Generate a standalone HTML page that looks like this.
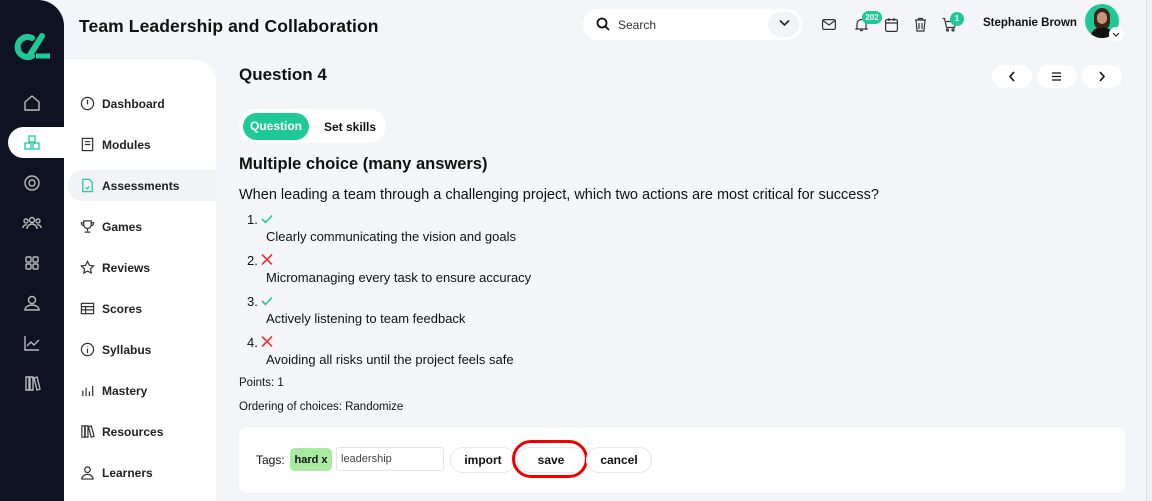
<!DOCTYPE html>
<html><head><style>
*{box-sizing:border-box;margin:0;padding:0}
body{width:1152px;height:501px;overflow:hidden;background:#f3f5f9;font-family:"Liberation Sans",sans-serif;color:#111;position:relative}
.side{position:absolute;left:0;top:0;width:64px;height:501px;background:#0f1222;border-top-right-radius:26px}
.si{position:absolute;left:22px;width:20px;height:20px}
.act{position:absolute;left:8px;top:127px;width:60px;height:31px;background:#fff;border-radius:16px 0 0 16px}
.nav{position:absolute;left:64px;top:60px;width:152px;height:441px;background:#fff;border-top-right-radius:22px}
.ni{position:absolute;left:4px;width:148px;height:31px;font-size:12px;font-weight:bold;color:#222;padding-left:34px;line-height:33px}
.ni svg{position:absolute;left:12px;top:8px}
.ni.on{background:#f1f3f7;border-radius:14px 0 0 14px}
.abs{position:absolute}
.btn{position:absolute;background:#fff;border-radius:14px;border:1px solid #e5e8ef;font-size:12px;font-weight:bold;text-align:center}
</style></head><body>
<div class="side">
<svg class="abs" style="left:12px;top:33px" width="40" height="28" viewBox="0 0 40 28"><path d="M20 5a10 10 0 1 0 0 18" stroke="#1ec997" stroke-width="6" fill="none" stroke-linecap="round"/><path d="M30 3L18 22" stroke="#1ec997" stroke-width="6" stroke-linecap="round"/><path d="M24 23h14" stroke="#1ec997" stroke-width="5"/></svg>
<svg class="si" style="top:93px" viewBox="0 0 20 20" fill="none" stroke="#bbb" stroke-width="1.4"><path d="M3 9l7-6 7 6v8H3z"/></svg>
<div class="act"></div>
<svg class="si" style="top:133px" viewBox="0 0 20 20" fill="none" stroke="#1ec997" stroke-width="1.3"><rect x="7" y="3" width="6" height="6"/><rect x="3" y="10" width="6" height="6"/><rect x="11" y="10" width="6" height="6"/></svg>
<svg class="si" style="top:173px" viewBox="0 0 20 20" fill="none" stroke="#bbb" stroke-width="1.4"><circle cx="10" cy="10" r="7"/><circle cx="10" cy="10" r="3"/></svg>
<svg class="si" style="top:213px" viewBox="0 0 20 20" fill="none" stroke="#bbb" stroke-width="1.4"><circle cx="10" cy="7" r="2.5"/><circle cx="4" cy="8" r="2"/><circle cx="16" cy="8" r="2"/><path d="M5 16a5 5 0 0 1 10 0M1 15a3 3 0 0 1 4-3M19 15a3 3 0 0 0-4-3"/></svg>
<svg class="si" style="top:253px" viewBox="0 0 20 20" fill="none" stroke="#bbb" stroke-width="1.4"><rect x="4" y="4" width="5" height="5" rx="1"/><rect x="11" y="4" width="5" height="5" rx="1"/><rect x="4" y="11" width="5" height="5" rx="1"/><rect x="11" y="11" width="5" height="5" rx="1"/></svg>
<svg class="si" style="top:293px" viewBox="0 0 20 20" fill="none" stroke="#bbb" stroke-width="1.4"><circle cx="10" cy="7" r="3.5"/><path d="M3 17a7 5 0 0 1 14 0z"/></svg>
<svg class="si" style="top:333px" viewBox="0 0 20 20" fill="none" stroke="#bbb" stroke-width="1.4"><path d="M3 3v14h14M5 13l4-4 3 3 5-5"/></svg>
<svg class="si" style="top:373px" viewBox="0 0 20 20" fill="none" stroke="#bbb" stroke-width="1.4"><path d="M4 4h3v13H4zM8 4h3v13H8zM12 5l3-1 3 12-3 1z"/></svg>
</div>
<div class="abs" style="left:79px;top:16px;font-size:17.5px;font-weight:bold;letter-spacing:0.1px">Team Leadership and Collaboration</div>
<div class="nav">
<div class="ni" style="top:28px"><svg width="15" height="15" viewBox="0 0 16 16" fill="none" stroke="#333" stroke-width="1.3"><circle cx="8" cy="8" r="6.5"/><path d="M8 4v5"/></svg>Dashboard</div>
<div class="ni" style="top:69px"><svg width="15" height="15" viewBox="0 0 16 16" fill="none" stroke="#333" stroke-width="1.3"><rect x="2.5" y="1.5" width="11" height="13"/><path d="M5 5h6M5 8h6"/></svg>Modules</div>
<div class="ni on" style="top:110px"><svg width="15" height="15" viewBox="0 0 16 16" fill="none" stroke="#1ec997" stroke-width="1.3"><path d="M3 1.5h7l3 3v10H3z"/><path d="M6 10l1.5 1.5L10 9"/></svg>Assessments</div>
<div class="ni" style="top:151px"><svg width="15" height="15" viewBox="0 0 16 16" fill="none" stroke="#333" stroke-width="1.3"><path d="M4 2h8v4a4 4 0 0 1-8 0zM4 4H1.5a2.5 2.5 0 0 0 2.5 3M12 4h2.5a2.5 2.5 0 0 1-2.5 3M8 10v3M5 14h6"/></svg>Games</div>
<div class="ni" style="top:192px"><svg width="15" height="15" viewBox="0 0 16 16" fill="none" stroke="#333" stroke-width="1.3"><path d="M8 1.5l2 4.2 4.5.6-3.3 3.1.8 4.5L8 11.8l-4 2.1.8-4.5L1.5 6.3 6 5.7z"/></svg>Reviews</div>
<div class="ni" style="top:233px"><svg width="15" height="15" viewBox="0 0 16 16" fill="none" stroke="#333" stroke-width="1.3"><rect x="1.5" y="2.5" width="13" height="11"/><path d="M1.5 6h13M1.5 9.5h13M6 6v7.5"/></svg>Scores</div>
<div class="ni" style="top:274px"><svg width="15" height="15" viewBox="0 0 16 16" fill="none" stroke="#333" stroke-width="1.3"><circle cx="8" cy="8" r="6.5"/><path d="M8 7v5M8 4.5v.5"/></svg>Syllabus</div>
<div class="ni" style="top:315px"><svg width="15" height="15" viewBox="0 0 16 16" fill="none" stroke="#333" stroke-width="1.3"><path d="M3 14V8M6.5 14V5M10 14V9M13.5 14V3"/></svg>Mastery</div>
<div class="ni" style="top:356px"><svg width="15" height="15" viewBox="0 0 16 16" fill="none" stroke="#333" stroke-width="1.3"><path d="M2 2h3v12H2zM5.5 2h3v12h-3zM9 3l3-1 3 11-3 1z"/></svg>Resources</div>
<div class="ni" style="top:397px"><svg width="15" height="15" viewBox="0 0 16 16" fill="none" stroke="#333" stroke-width="1.3"><circle cx="8" cy="5" r="3"/><path d="M2 15a6 5 0 0 1 12 0z"/></svg>Learners</div>
</div>
<!-- top bar -->
<div class="abs" style="left:583px;top:9px;width:219px;height:31px;background:#fff;border-radius:16px"></div>
<svg class="abs" style="left:596px;top:17px" width="14" height="14" viewBox="0 0 14 14" fill="none" stroke="#111" stroke-width="1.8"><circle cx="6" cy="6" r="4.5"/><path d="M9.5 9.5l3.5 3.5"/></svg>
<div class="abs" style="left:618px;top:18px;font-size:12px;color:#333">Search</div>
<div class="abs" style="left:768px;top:12px;width:31px;height:25px;background:#f1f3f7;border-radius:12px"></div>
<svg class="abs" style="left:779px;top:19px" width="11" height="8" viewBox="0 0 11 8" fill="none" stroke="#222" stroke-width="1.6"><path d="M1 1.5l4.5 4.5 4.5-4.5"/></svg>
<svg class="abs" style="left:822px;top:19px" width="14" height="11" viewBox="0 0 14 11" fill="none" stroke="#333" stroke-width="1.2"><rect x=".6" y=".6" width="12.8" height="9.8" rx="1.5"/><path d="M1 1.5l6 4.5 6-4.5"/></svg>
<svg class="abs" style="left:855px;top:17px" width="13" height="15" viewBox="0 0 13 15" fill="none" stroke="#333" stroke-width="1.2"><path d="M2 11V7a4.5 4.5 0 0 1 9 0v4l1 1H1zM5 13.5h3"/></svg>
<div class="abs" style="left:862px;top:11px;width:20px;height:13px;background:#1ec997;border-radius:7px;color:#fff;font-size:8px;font-weight:bold;text-align:center;line-height:13px">202</div>
<svg class="abs" style="left:885px;top:17px" width="13" height="15" viewBox="0 0 13 15" fill="none" stroke="#333" stroke-width="1.2"><rect x=".6" y="2.6" width="11.8" height="11.8" rx="1.5"/><path d="M.6 6h11.8M4 1v3M9 1v3"/></svg>
<svg class="abs" style="left:914px;top:17px" width="13" height="15" viewBox="0 0 13 15" fill="none" stroke="#333" stroke-width="1.2"><path d="M1 3h11M4.5 3V1.5h4V3M2 3l1 11h7l1-11M5 6v6M8 6v6"/></svg>
<svg class="abs" style="left:942px;top:17px" width="15" height="15" viewBox="0 0 15 15" fill="none" stroke="#333" stroke-width="1.2"><path d="M.5 1.5h2l2 9h8l1.5-6H4"/><circle cx="5.5" cy="13" r="1"/><circle cx="11" cy="13" r="1"/></svg>
<div class="abs" style="left:950px;top:12px;width:14px;height:14px;background:#1ec997;border-radius:7px;color:#fff;font-size:8px;font-weight:bold;text-align:center;line-height:14px">1</div>
<div class="abs" style="left:983px;top:17px;font-size:11.5px;font-weight:bold">Stephanie Brown</div>
<div class="abs" style="left:1085px;top:4px;width:34px;height:34px;border-radius:50%;background:#1ec997;overflow:hidden"><div style="position:absolute;left:9px;top:4px;width:16px;height:22px;background:#3a2418;border-radius:8px"></div><div style="position:absolute;left:12px;top:8px;width:10px;height:12px;background:#c99578;border-radius:5px"></div><div style="position:absolute;left:6px;top:24px;width:22px;height:14px;background:#111;border-radius:8px 8px 0 0"></div></div>
<div class="abs" style="left:1109px;top:27px;width:14px;height:14px;border-radius:50%;background:#fff"></div>
<svg class="abs" style="left:1112px;top:32px" width="8" height="5" viewBox="0 0 8 5" fill="none" stroke="#222" stroke-width="1.2"><path d="M1 1l3 3 3-3"/></svg>
<div class="abs" style="right:0;top:0;width:6px;height:501px;background:#eef0f4;border-left:1px solid #ddd"></div>
<!-- content -->
<div class="abs" style="left:239px;top:65px;font-size:17px;font-weight:bold">Question 4</div>
<div class="abs" style="left:992px;top:65px;width:40px;height:23px;background:#fff;border-radius:12px"></div>
<div class="abs" style="left:1037px;top:65px;width:40px;height:23px;background:#fff;border-radius:12px"></div>
<div class="abs" style="left:1082px;top:65px;width:40px;height:23px;background:#fff;border-radius:12px"></div>
<svg class="abs" style="left:1008px;top:71px" width="8" height="11" viewBox="0 0 8 11" fill="none" stroke="#111" stroke-width="1.6"><path d="M6 1L2 5.5 6 10"/></svg>
<svg class="abs" style="left:1051px;top:72px" width="11" height="9" viewBox="0 0 11 9" fill="none" stroke="#111" stroke-width="1.2"><path d="M1 1h9M1 4.5h9M1 8h9"/></svg>
<svg class="abs" style="left:1098px;top:71px" width="8" height="11" viewBox="0 0 8 11" fill="none" stroke="#111" stroke-width="1.6"><path d="M2 1l4 4.5L2 10"/></svg>
<div class="abs" style="left:239px;top:109px;width:147px;height:34px;background:#fff;border-radius:17px"></div>
<div class="abs" style="left:243px;top:113px;width:66px;height:27px;background:#1ec997;border-radius:14px;color:#fff;font-size:12px;font-weight:bold;text-align:center;line-height:27px">Question</div>
<div class="abs" style="left:324px;top:120px;font-size:12px;font-weight:bold">Set skills</div>
<div class="abs" style="left:239px;top:155px;font-size:16.5px;font-weight:bold">Multiple choice (many answers)</div>
<div class="abs" style="left:239px;top:187px;font-size:14.5px">When leading a team through a challenging project, which two actions are most critical for success?</div>
<div class="abs" style="left:247px;top:211px;font-size:13px;line-height:17px">
<div style="height:41px">1. <svg width="12" height="10" viewBox="0 0 12 10" fill="none" stroke="#1ec997" stroke-width="1.6"><path d="M1 5l3.5 3.5L11 1.5"/></svg><br><span style="padding-left:19px">Clearly communicating the vision and goals</span></div>
<div style="height:41px">2. <svg width="12" height="11" viewBox="0 0 12 11" fill="none" stroke="#e33" stroke-width="1.6"><path d="M1 0.5l10 10M11 0.5l-10 10"/></svg><br><span style="padding-left:19px">Micromanaging every task to ensure accuracy</span></div>
<div style="height:41px">3. <svg width="12" height="10" viewBox="0 0 12 10" fill="none" stroke="#1ec997" stroke-width="1.6"><path d="M1 5l3.5 3.5L11 1.5"/></svg><br><span style="padding-left:19px">Actively listening to team feedback</span></div>
<div style="height:41px">4. <svg width="12" height="11" viewBox="0 0 12 11" fill="none" stroke="#e33" stroke-width="1.6"><path d="M1 0.5l10 10M11 0.5l-10 10"/></svg><br><span style="padding-left:19px">Avoiding all risks until the project feels safe</span></div>
</div>
<div class="abs" style="left:239px;top:377px;font-size:11.5px">Points: 1</div>
<div class="abs" style="left:239px;top:401px;font-size:11.5px">Ordering of choices: Randomize</div>
<div class="abs" style="left:239px;top:428px;width:886px;height:64px;background:#fff;border-radius:8px"></div>
<div class="abs" style="left:256px;top:453px;font-size:12px">Tags:</div>
<div class="abs" style="left:290px;top:448px;width:42px;height:23px;background:#a8eba0;border-radius:5px;font-size:11px;font-weight:bold;text-align:center;line-height:24px">hard x</div>
<div class="abs" style="left:336px;top:447px;width:108px;height:24px;border:1px solid #e2e5ec;border-radius:3px;font-size:11px;color:#444;padding:5px 4px">leadership</div>
<div class="btn" style="left:450px;top:447px;width:66px;height:26px;line-height:24px">import</div>
<div class="btn" style="left:517px;top:447px;width:68px;height:26px;line-height:24px">save</div>
<div class="abs" style="left:512px;top:440px;width:76px;height:38px;border:3px solid #e00;border-radius:19px"></div>
<div class="btn" style="left:586px;top:447px;width:66px;height:26px;line-height:24px">cancel</div>
</body></html>
